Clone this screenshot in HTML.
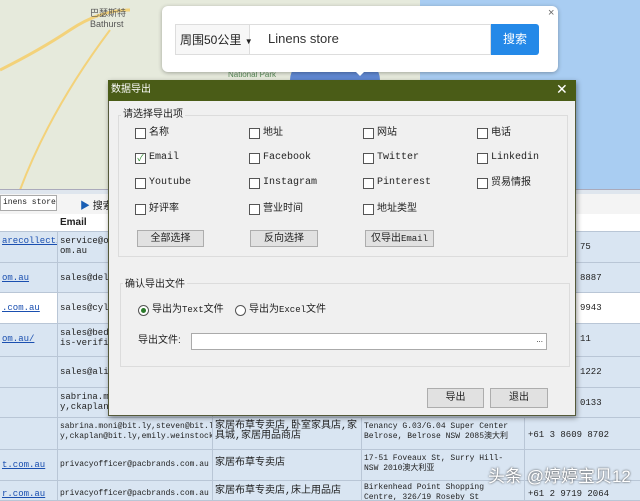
<!DOCTYPE html>
<html><head><meta charset="utf-8"><style>
*{margin:0;padding:0;box-sizing:border-box}
body{width:640px;height:498px;overflow:hidden;position:relative;background:#fff;font-family:"Liberation Sans","Noto Sans CJK SC",sans-serif;font-size:11px;color:#222}
.a{position:absolute}
.mono{font-family:"Liberation Mono","Noto Sans CJK SC",monospace;font-size:9px}
.row{position:absolute;left:0;width:640px;border-bottom:1px solid #b9c6d6}
.cell{position:absolute;top:0;bottom:0;border-right:1px solid #b9c6d6;padding:4px 2px;overflow:hidden;line-height:10px;white-space:nowrap}
.cb{position:absolute;width:11px;height:11px;border:1px solid #555;background:#fff}
.lbl{position:absolute;font-size:10px;line-height:12px;white-space:nowrap}
.btn{position:absolute;height:17px;background:#e1e1e1;border:1px solid #adadad;text-align:center;font-size:10px;line-height:15px}
</style></head><body>
<!-- map -->
<div class="a" style="left:0;top:0;width:640px;height:190px;background:#e6eadc"></div>
<div class="a" style="left:420px;top:0;width:220px;height:190px;background:#a9cdf2"></div>
<div class="a" style="left:290px;top:60px;width:90px;height:40px;background:#3f6fd0;border-radius:45px;opacity:.8"></div>
<svg class="a" style="left:0;top:0" width="300" height="190"><path d="M0 70 Q40 50 70 30 T130 10" stroke="#f3d27a" stroke-width="3" fill="none"/><path d="M20 190 Q50 110 110 30" stroke="#f3d27a" stroke-width="2" fill="none"/></svg>
<div class="a" style="left:90px;top:6px;font-size:9px;color:#555">巴瑟斯特<br>Bathurst</div>
<div class="a" style="left:228px;top:70px;font-size:8px;color:#5a8a5a">National Park</div>
<div class="a" style="left:0;top:189px;width:640px;height:5px;background:#dfe6ee;border-top:1px solid #aab"></div>
<!-- toolbar -->
<div class="a" style="left:0;top:194px;width:640px;height:20px;background:#f4f4f4"></div>
<div class="a mono" style="left:0;top:195px;width:57px;height:16px;border:1px solid #aaa;background:#fff;padding:2px;font-size:8px;white-space:nowrap;overflow:hidden">inens store</div>
<div class="a" style="left:80px;top:197px;font-size:10px"><span style="color:#1a5fb4">▶</span> 搜索</div>
<!-- header -->
<div class="row" style="top:214px;height:18px;background:#fff"><div class="a" style="left:60px;top:3px;font-weight:bold;font-size:10px">Email</div></div>
<div class="row mono" style="top:232px;height:31px;background:#d9e5f2"><div class="cell" style="left:0;width:58px;color:#1a4fb0;text-decoration:underline">arecollectio</div><div class="cell" style="left:58px;width:155px">service@oa<br>om.au</div><div class="a" style="left:580px;top:10px">75</div></div>
<div class="row mono" style="top:263px;height:30px;background:#d9e5f2"><div class="cell" style="left:0;width:58px;color:#1a4fb0;text-decoration:underline;padding-top:10px">om.au</div><div class="cell" style="left:58px;width:155px;padding-top:10px">sales@delu</div><div class="a" style="left:580px;top:10px">8887</div></div>
<div class="row mono" style="top:293px;height:31px;background:#fff"><div class="cell" style="left:0;width:58px;color:#1a4fb0;text-decoration:underline;padding-top:10px">.com.au</div><div class="cell" style="left:58px;width:155px;padding-top:10px;background:#e4ecf5">sales@cyli</div><div class="a" style="left:580px;top:10px">9943</div></div>
<div class="row mono" style="top:324px;height:33px;background:#d9e5f2"><div class="cell" style="left:0;width:58px;color:#1a4fb0;text-decoration:underline;padding-top:10px">om.au/</div><div class="cell" style="left:58px;width:155px">sales@bedw<br>is-verifie</div><div class="a" style="left:580px;top:10px">11</div></div>
<div class="row mono" style="top:357px;height:31px;background:#d9e5f2"><div class="cell" style="left:0;width:58px"></div><div class="cell" style="left:58px;width:155px;padding-top:10px">sales@alin</div><div class="a" style="left:580px;top:10px">1222</div></div>
<div class="row mono" style="top:388px;height:30px;background:#d9e5f2"><div class="cell" style="left:0;width:58px"></div><div class="cell" style="left:58px;width:155px">sabrina.moni@bit.ly,steven@bit.l<br>y,ckaplan@bit.ly,emily.weinstock</div><div class="a" style="left:580px;top:10px">0133</div></div>
<div class="row mono" style="top:418px;height:32px;background:#d9e5f2;font-size:8px"><div class="cell" style="left:0;width:58px"></div><div class="cell" style="left:58px;width:155px">sabrina.moni@bit.ly,steven@bit.l<br>y,ckaplan@bit.ly,emily.weinstock</div><div class="cell" style="left:213px;width:149px;font-size:10px;white-space:normal">家居布草专卖店,卧室家具店,家具城,家居用品商店</div><div class="cell" style="left:362px;width:163px">Tenancy G.03/G.04 Super Center<br>Belrose, Belrose NSW 2085澳大利</div><div class="a" style="left:528px;top:12px;font-size:9px">+61 3 8609 8702</div></div>
<div class="row mono" style="top:450px;height:31px;background:#d9e5f2"><div class="cell" style="left:0;width:58px;color:#1a4fb0;text-decoration:underline;padding-top:10px">t.com.au</div><div class="cell" style="left:58px;width:155px;padding-top:10px;font-size:8px">privacyofficer@pacbrands.com.au</div><div class="cell" style="left:213px;width:149px;font-size:10px;padding-top:9px">家居布草专卖店</div><div class="cell" style="left:362px;width:163px;font-size:8px">17-51 Foveaux St, Surry Hill-<br>NSW 2010澳大利亚</div></div>
<div class="row mono" style="top:481px;height:20px;background:#d9e5f2"><div class="cell" style="left:0;width:58px;color:#1a4fb0;text-decoration:underline;padding-top:8px">r.com.au</div><div class="cell" style="left:58px;width:155px;padding-top:8px;font-size:8px">privacyofficer@pacbrands.com.au</div><div class="cell" style="left:213px;width:149px;font-size:10px;padding-top:6px">家居布草专卖店,床上用品店</div><div class="cell" style="left:362px;width:163px;padding-top:2px;font-size:8px">Birkenhead Point Shopping<br>Centre, 326/19 Roseby St</div><div class="a" style="left:528px;top:8px;font-size:9px">+61 2 9719 2064</div></div>
<div class="a" style="left:488px;top:462px;font-size:17px;color:#fff;text-shadow:0 0 2px #333;white-space:nowrap">头条 @婷婷宝贝12</div>
<!-- search popup -->
<div class="a" style="left:162px;top:6px;width:396px;height:66px;background:#fff;border-radius:6px;box-shadow:0 1px 4px rgba(0,0,0,.3)"></div>
<div class="a" style="left:352px;top:68px;width:0;height:0;border-left:8px solid transparent;border-right:8px solid transparent;border-top:8px solid #fff"></div>
<div class="a" style="left:548px;top:7px;font-size:11px;color:#666">×</div>
<div class="a" style="left:175px;top:24px;width:316px;height:31px;border:1px solid #ddd;background:#fff"></div>
<div class="a" style="left:176px;top:25px;width:74px;height:29px;background:#f7f7f7;border-right:1px solid #ddd"></div>
<div class="a" style="left:180px;top:31px;font-size:12px;white-space:nowrap">周围50公里 <span style="font-size:8px">▼</span></div>
<div class="a" style="left:268px;top:31px;font-size:13px;color:#333">Linens store</div>
<div class="a" style="left:491px;top:24px;width:48px;height:31px;background:#2489e8;border-radius:0 3px 3px 0;color:#fff;font-size:12px;text-align:center;line-height:31px">搜索</div>
<!-- dialog -->
<div class="a" style="left:108px;top:80px;width:468px;height:336px;background:#f0f0f0;border:1px solid #555a3a;box-shadow:1px 2px 5px rgba(0,0,0,.4)"></div>
<div class="a" style="left:108px;top:80px;width:468px;height:21px;background:#4a5c17"></div>
<div class="a" style="left:111px;top:84px;color:#fff;font-size:10px;line-height:12px">数据导出</div>
<div class="a" style="left:556px;top:81px;color:#fff;font-size:14px">✕</div>
<div class="a" style="left:118px;top:115px;width:450px;height:142px;border:1px solid #dcdcdc"></div>
<div class="a" style="left:121px;top:109px;background:#f0f0f0;padding:0 2px;font-size:10px;line-height:12px">请选择导出项</div>
<div class="cb" style="left:135px;top:128px"></div><div class="lbl" style="left:149px;top:127px">名称</div>
<div class="cb" style="left:249px;top:128px"></div><div class="lbl" style="left:263px;top:127px">地址</div>
<div class="cb" style="left:363px;top:128px"></div><div class="lbl" style="left:377px;top:127px">网站</div>
<div class="cb" style="left:477px;top:128px"></div><div class="lbl" style="left:491px;top:127px">电话</div>
<div class="cb" style="left:135px;top:153px;font-size:9px;line-height:9px;color:#2a8a2a;text-align:center">✓</div><div class="lbl mono" style="left:149px;top:152px">Email</div>
<div class="cb" style="left:249px;top:153px"></div><div class="lbl mono" style="left:263px;top:152px">Facebook</div>
<div class="cb" style="left:363px;top:153px"></div><div class="lbl mono" style="left:377px;top:152px">Twitter</div>
<div class="cb" style="left:477px;top:153px"></div><div class="lbl mono" style="left:491px;top:152px">Linkedin</div>
<div class="cb" style="left:135px;top:178px"></div><div class="lbl mono" style="left:149px;top:177px">Youtube</div>
<div class="cb" style="left:249px;top:178px"></div><div class="lbl mono" style="left:263px;top:177px">Instagram</div>
<div class="cb" style="left:363px;top:178px"></div><div class="lbl mono" style="left:377px;top:177px">Pinterest</div>
<div class="cb" style="left:477px;top:178px"></div><div class="lbl" style="left:491px;top:177px">贸易情报</div>
<div class="cb" style="left:135px;top:204px"></div><div class="lbl" style="left:149px;top:203px">好评率</div>
<div class="cb" style="left:249px;top:204px"></div><div class="lbl" style="left:263px;top:203px">营业时间</div>
<div class="cb" style="left:363px;top:204px"></div><div class="lbl" style="left:377px;top:203px">地址类型</div>
<div class="btn" style="left:137px;top:230px;width:67px">全部选择</div>
<div class="btn" style="left:250px;top:230px;width:68px">反向选择</div>
<div class="btn" style="left:365px;top:230px;width:69px">仅导出<span class="mono">Email</span></div>
<div class="a" style="left:120px;top:283px;width:450px;height:84px;border:1px solid #dcdcdc"></div>
<div class="a" style="left:123px;top:279px;background:#f0f0f0;padding:0 2px;font-size:10px;line-height:12px">确认导出文件</div>
<div class="a" style="left:138px;top:305px;width:11px;height:11px;border:1px solid #555;border-radius:50%;background:#fff"><div class="a" style="left:2px;top:2px;width:5px;height:5px;border-radius:50%;background:#2a7a2a"></div></div>
<div class="lbl" style="left:152px;top:304px">导出为<span class="mono">Text</span>文件</div>
<div class="a" style="left:235px;top:305px;width:11px;height:11px;border:1px solid #555;border-radius:50%;background:#fff"></div>
<div class="lbl" style="left:249px;top:304px">导出为<span class="mono">Excel</span>文件</div>
<div class="lbl" style="left:138px;top:335px">导出文件:</div>
<div class="a" style="left:191px;top:333px;width:356px;height:17px;border:1px solid #aaa;background:#fff"><span class="a" style="right:3px;top:1px;font-size:8px">...</span></div>
<div class="btn" style="left:427px;top:388px;width:57px;height:20px;line-height:18px">导出</div>
<div class="btn" style="left:490px;top:388px;width:58px;height:20px;line-height:18px">退出</div>
</body></html>
